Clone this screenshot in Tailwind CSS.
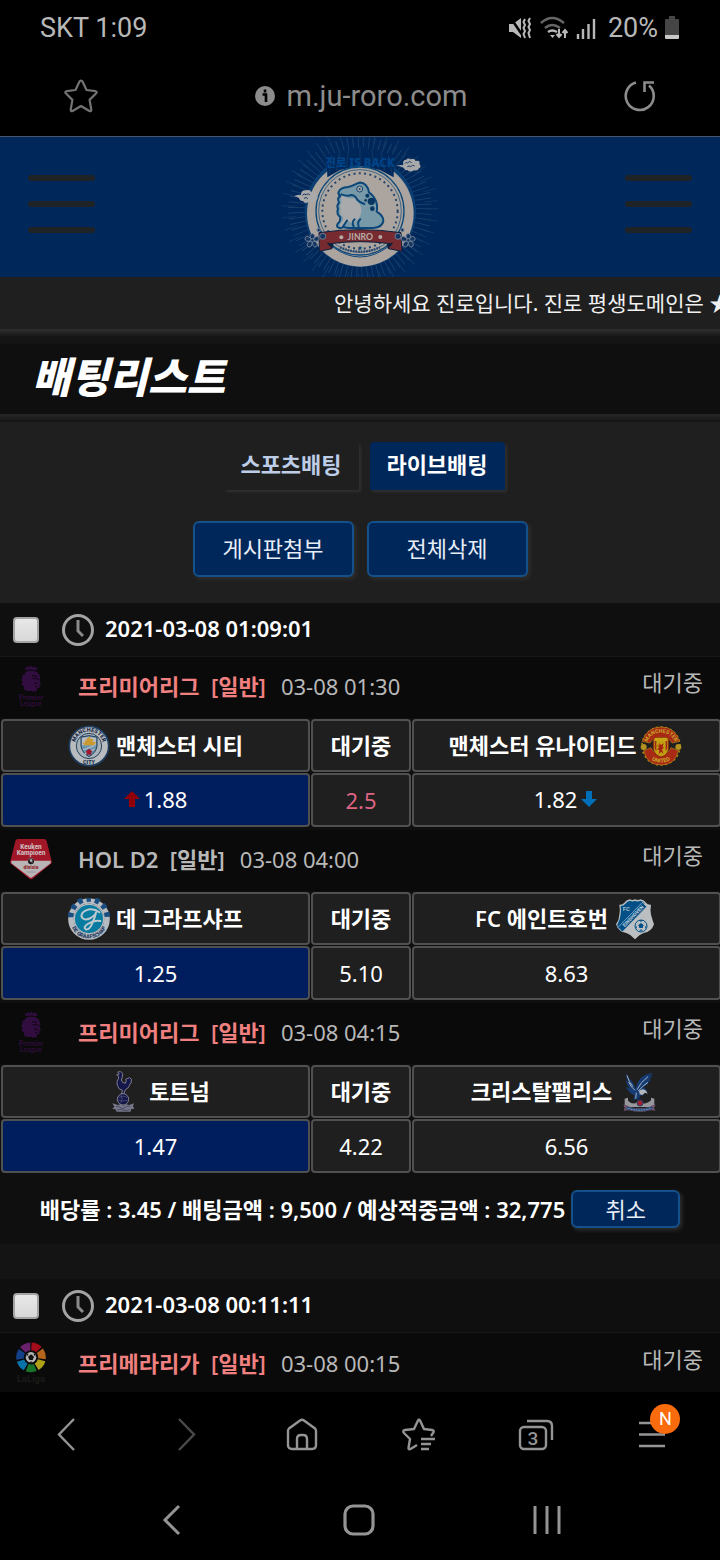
<!DOCTYPE html>
<html lang="ko">
<head>
    <meta charset="UTF-8">
    <meta name="viewport" content="width=device-width, initial-scale=1.0">
    <title>배팅리스트</title>
    <script src="https://cdn.jsdelivr.net/npm/@tailwindcss/browser@4"></script>
</head>
<body class="bg-black text-white text-[22px] leading-7 font-['Noto_Sans','Noto_Sans_CJK_KR',sans-serif]">

    <!-- Shared icons -->
    <svg class="hidden" aria-hidden="true">
        <symbol id="clock" viewBox="0 0 34 34">
            <circle cx="17" cy="17" r="14.5" fill="none" stroke="#a3a3a3" stroke-width="3"/>
            <path d="M17 7V18l5 5" fill="none" stroke="#8a8a8a" stroke-width="3"/>
        </symbol>
        <symbol id="premier" viewBox="0 0 126 126">
            <path d="M46 15l-1-9 6 3 3-7 5 6 5-7 5 7 6-6 2 8 6-3-3 9q-17-4-34-1z" fill="#310d40"/>
            <path d="M34 44l4-8-2-6 8-2 3-8 11-3 14 0 10 5 6 7 3 10-3 6 5 12-5 3 1 8-7 2-2 8-10 2-9-3-6 2-12-4-2-11-7-6 4-6z" fill="#310d40"/>
            <path d="M66 32l15 2M68 42l9-2 9 3M72 54l12 1M75 65l7 0" fill="none" stroke="#10050f" stroke-width="3"/>
            <text x="63" y="104" text-anchor="middle" font-family="Lato" font-size="21" font-weight="bold" fill="#300d3d">Premier</text>
            <text x="63" y="122" text-anchor="middle" font-family="Lato" font-size="21" font-weight="bold" fill="#300d3d">League</text>
        </symbol>
    </svg>

    <!-- Status bar -->
    <div class="h-14 px-10 flex items-center justify-between font-['Roboto',sans-serif] text-[27px] text-[#b8b8b8]">
        <span>SKT 1:09</span>
        <div class="flex items-center">
            <svg class="w-6 h-6" viewBox="0 0 24 24" fill="none" stroke="#b8b8b8">
                <path d="M1 8h4l8-6v20l-8-6H1z" fill="#b8b8b8" stroke="none"/>
                <path d="M2 1l13 19" stroke="#000" stroke-width="2.5"/>
                <path d="M17 3l-1.500 3 1.500 3-1.500 3 1.500 3-1.500 3 1.500 4M22 2l-1.500 3 1.500 3-1.500 3 1.500 3-1.500 3 1.500 5" stroke-width="2"/>
            </svg>
            <svg class="w-7 h-6 ml-2" viewBox="0 0 28 24" fill="none" stroke-width="2.4">
                <path d="M1 7Q12-3 24 7M5 12q7-6 15 0" stroke="#666"/>
                <path d="M8 16q4-3 9 0" stroke="#b8b8b8"/>
                <path d="M10 19h5l-2.500 3z" fill="#b8b8b8"/>
                <path d="M19 13v8m-2.500-3l2.500 3 2.500-3M25 22v-8m-2.500 3l2.500-3 2.500 3" stroke="#b8b8b8" stroke-width="2"/>
            </svg>
            <svg class="w-5 h-6 ml-2" viewBox="0 0 20 24" stroke="#b8b8b8" stroke-width="2.4">
                <path d="M2 18v5M7 13v10M12.500 8v15M18 3v20"/>
            </svg>
            <span class="ml-3">20%</span>
            <svg class="w-4 h-6 ml-[6px]" viewBox="0 0 16 24">
                <path d="M5 0h6v3h3q1 0 1 1v16H1V4q0-1 1-1h3z" fill="#454545"/>
                <path d="M1 19h14v3q0 1-1 1H2q-1 0-1-1z" fill="#c8c8c8"/>
            </svg>
        </div>
    </div>

    <!-- Address bar -->
    <div class="h-20 px-16 flex items-center justify-between font-['Roboto',sans-serif] text-[29px] text-[#8c8c8c]">
        <button aria-label="즐겨찾기">
            <svg class="block w-[34px] h-[34px]" viewBox="0 0 34 34" fill="none" stroke="#737373" stroke-width="2.2" stroke-linejoin="round">
                <path d="M17 1.500q1 0 1.500 1l4 8.500 9 1.200q2 .5.700 2.100l-6.600 6.600 1.700 9.800q0 2-1.900 1.300L17 27l-8.400 5q-1.900.700-1.900-1.300l1.700-9.800-6.600-6.600q-1.300-1.600.700-2.100l9-1.200 4-8.500q.5-1 1.500-1z"/>
            </svg>
        </button>
        <div class="flex items-center gap-3">
            <svg class="w-5 h-5" viewBox="0 0 20 20">
                <circle cx="10" cy="10" r="10" fill="#8c8c8c"/>
                <path d="M10 3.500v3M7.500 8.500H11v7.500" fill="none" stroke="#000" stroke-width="2.6"/>
            </svg>
            <span>m.ju-roro.com</span>
        </div>
        <button aria-label="새로고침">
            <svg class="block w-8 h-8" viewBox="0 0 32 32" fill="none" stroke="#8c8c8c" stroke-width="2.6">
                <path d="M12 2.500A14 14 0 1 0 25 5.500M20.500 12V2.500h9.500"/>
            </svg>
        </button>
    </div>

    <!-- Site header -->
    <header class="border-t border-[#46566e] bg-[#00275a] px-7 flex items-center justify-between">
        <button class="w-[67px] pb-[6px] flex flex-col gap-5" aria-label="메뉴">
            <span class="h-[6px] w-full rounded-full bg-[#1f2326]"></span>
            <span class="h-[6px] w-full rounded-full bg-[#1f2326]"></span>
            <span class="h-[6px] w-full rounded-full bg-[#1f2326]"></span>
        </button>
        <svg class="w-[180px] h-[140px]" viewBox="0 21 540 420" role="img" aria-label="진로">
            <g fill="none">
                <circle cx="270" cy="235" r="180" stroke="#1b416d" stroke-width="70" stroke-dasharray="2.5 12"/>
                <circle cx="270" cy="235" r="215" stroke="#123864" stroke-width="40" stroke-dasharray="3 31"/>
            </g>
            <circle cx="271" cy="244" r="167" fill="#0b3f74"/>
            <circle cx="271" cy="250" r="160" fill="#aca59f"/>
            <path d="M170 75L172 142L210 120L270 108L330 120L371 142L372 75L270 50z" fill="#00275a"/>
            <path d="M185 76L178 132M210 64L200 120M236 58L230 110M270 50V105M305 58L312 110M332 64L344 120M355 76L366 132" stroke="#1b416d" stroke-width="2"/>
            <text x="270" y="110" text-anchor="middle" font-size="34" font-weight="900" fill="#004488">진로 IS BACK</text>
            <circle cx="270" cy="243" r="132" fill="#aca59f" stroke="#0b4778" stroke-width="4"/>
            <circle cx="270" cy="243" r="124" fill="none" stroke="#0b4778" stroke-width="2"/>
            <circle cx="270" cy="243" r="113" fill="none" stroke="#27466b" stroke-width="6" stroke-dasharray="6 10"/>
            <!-- Toad -->
            <path d="M262 160q14-6 25 5 9 10 10 22 20 14 24 38 1 12-1 20 21 12 20 28-3 19-30 21h-76l-16-3q-4 5-10 3-11-3-5-13 9-7 8-19-13-11-7-25-5-10 3-19-7-14 4-20-9-6-4-14 5-11 27-13 13-3 28-11z" fill="#7899a8"/>
            <path d="M216 195q22 14 39 9l6 12q12 5 13 24 0 16-9 26-10 7-15 15l-15-7-15 17q-14 1-9-10 9-7 8-19-13-11-7-25-5-10 3-19-6-13 1-23z" fill="#a9aaab"/>
            <g fill="none" stroke="#0b4778" stroke-width="6" stroke-linejoin="round" stroke-linecap="round">
                <path d="M262 160q14-6 25 5 9 10 10 22 20 14 24 38 1 12-1 20 21 12 20 28-3 19-30 21h-76l-16-3q-4 5-10 3-11-3-5-13 9-7 8-19-13-11-7-25-5-10 3-19-7-14 4-20-9-6-4-14 5-11 27-13 13-3 28-11z"/>
                <path d="M214 193q18 7 29 2 12 0 18 13 7 9 22 14M219 290l12-18M254 268q-10 8-3 22M271 268q-10 8-5 22"/>
            </g>
            <circle cx="269" cy="177" r="9" fill="#aca59f" stroke="#0b4778" stroke-width="3"/>
            <circle cx="269" cy="177" r="3" fill="#0b4778"/>
            <g fill="#083762">
                <circle cx="292" cy="197" r="6"/><circle cx="304" cy="214" r="11"/>
                <circle cx="287" cy="211" r="4"/><circle cx="307" cy="236" r="7"/>
            </g>
            <!-- Ribbon and lower lettering -->
            <path d="M187 350Q270 412 355 350" fill="none" stroke="#0b4778" stroke-width="3"/>
            <path d="M210 352Q270 378 330 352" fill="none" stroke="#27466b" stroke-width="7" stroke-dasharray="5 3"/>
            <text x="270" y="358" text-anchor="middle" font-size="15" fill="#0b4778">★</text>
            <path d="M147 308Q270 290 393 308L396 364L355 356L352 340Q270 330 189 340L186 356L148 364z" fill="#772b31" stroke="#0b1f3c" stroke-width="3"/>
            <path d="M189 340L186 356L170 338zM352 340L355 356L370 338z" fill="#0b1f3c"/>
            <circle cx="214" cy="322" r="6" fill="#b5aca7"/><circle cx="331" cy="321" r="6" fill="#b5aca7"/>
            <text x="271" y="329" text-anchor="middle" font-family="Lato" font-size="26" font-weight="bold" fill="#b5aca7">JINRO</text>
            <!-- Flowers -->
            <g fill="#12345f" stroke="#708098" stroke-width="3">
                <path d="M127 331q-14-18 0-20 14 2 0 20 14-20 20-6 2 13-20 6 22 8 12 19-12 5-12-19 0 25-13 19-10-11 13-19-23 8-22-7 7-12 22 7z"/>
                <path d="M415 331q-14-18 0-20 14 2 0 20 14-20 20-6 2 13-20 6 22 8 12 19-12 5-12-19 0 25-13 19-10-11 13-19-23 8-22-7 7-12 22 7z"/>
                <circle cx="127" cy="331" r="5"/><circle cx="415" cy="331" r="5"/>
                <circle cx="158" cy="319" r="9"/><circle cx="384" cy="319" r="9"/>
                <circle cx="146" cy="300" r="5"/><circle cx="397" cy="300" r="5"/>
            </g>
            <!-- Clouds -->
            <path d="M378 108q14-4 22-2-4-17 9-17 3-7 13-1 10-6 15 5 15-3 11 9 8 8-1 13-4 9-15 6-11 8-20-1-6 3-9-4-8-9-25-8z" fill="#aaa9aa"/>
            <path d="M72 199q10-7 21-4-1-14 14-14 14-4 17 6 15-6 15 9 8 8 0 15-10 10-23 5-12 8-17-3-10 1-12-9-7-5-15-5z" fill="#aaa9aa"/>
            <path d="M405 101q3-7 8-2 5-9 12-1M412 110q5-4 10 0 6-7 12-2M97 196q5-7 11-2 8-6 12 1M102 205q7-5 12 1" fill="none" stroke="#203f65" stroke-width="3"/>
        </svg>
        <button class="w-[67px] pb-[6px] flex flex-col gap-5" aria-label="내 정보">
            <span class="h-[6px] w-full rounded-full bg-[#1f2326]"></span>
            <span class="h-[6px] w-full rounded-full bg-[#1f2326]"></span>
            <span class="h-[6px] w-full rounded-full bg-[#1f2326]"></span>
        </button>
    </header>

    <!-- Notice ticker -->
    <div class="h-[52px] pl-[334px] flex items-center overflow-hidden whitespace-nowrap bg-[#1f1f1f] text-[21px] text-[#f0f0f0]">
        <p>안녕하세요 진로입니다. 진로 평생도메인은 ★</p>
    </div>
    <div class="h-[15px] bg-linear-to-b from-[#303030] via-[#161616] to-[#131313]"></div>

    <!-- Page title -->
    <div class="h-[70px] px-8 pb-1 flex items-center bg-[#0f0f0f]">
        <h1 class="text-[42px] leading-[60px] font-black italic">배팅리스트</h1>
    </div>
    <div class="h-2 bg-linear-to-b from-[#282828] to-[#141414]"></div>

    <main class="overflow-x-clip bg-[#141414]">
        <section class="bg-[#1f1f1f] pt-5 pb-[26px]">
            <div class="pl-2 flex justify-center gap-[11px] font-bold">
                <button class="w-[135px] h-12 pb-1 rounded-t text-[#bdcde8] shadow-[2px_2px_3px_#303030]">스포츠배팅</button>
                <button class="w-[135px] h-12 pb-1 rounded-t bg-[#00275a] shadow-[2px_2px_3px_#303030]">라이브배팅</button>
            </div>
            <div class="mt-[31px] flex justify-center gap-[13px]">
                <button class="w-[161px] h-14 pb-[2px] rounded-md border-2 border-[#14508a] bg-[#00275a] text-[#e8eef8] shadow-[2px_2px_4px_#303030]">게시판첨부</button>
                <button class="w-[161px] h-14 pb-[2px] rounded-md border-2 border-[#14508a] bg-[#00275a] text-[#e8eef8] shadow-[2px_2px_4px_#303030]">전체삭제</button>
            </div>
        </section>

        <!-- Bet slip 1 -->
        <section class="bg-[#0f0f0f]">
            <div class="h-[54px] pl-[13px] flex items-center border-b border-[#161616]">
                <input type="checkbox" id="bet1" class="appearance-none w-[26px] h-[26px] rounded border-2 border-[#a3a3a3] bg-linear-to-b from-[#e8e8e8] to-[#d8d8d8]">
                <label for="bet1" class="ml-[22px] flex items-center gap-[10px] font-semibold">
                    <svg class="w-[34px] h-[34px]"><use href="#clock"/></svg>
                    <span class="pb-[3px]">2021-03-08 01:09:01</span>
                </label>
            </div>

            <!-- Match 1 -->
            <div class="h-[61px] pl-[10px] pr-[17px] pb-[3px] flex items-center bg-[#0a0a0a]">
                <svg class="w-[42px] h-[42px]"><use href="#premier"/></svg>
                <h2 class="ml-[26px] font-semibold text-[#f08080] whitespace-pre">프리미어리그  [일반]</h2>
                <span class="ml-[15px] text-[#b8b8b8]">03-08 01:30</span>
                <span class="ml-auto pb-2 text-[#b8b8b8]">대기중</span>
            </div>
            <table class="w-[calc(100%+2px)] table-fixed border-separate border-spacing-px mb-[2px] text-center">
                <tr class="h-[53px] font-semibold">
                    <td class="rounded-sm border-2 border-[#505050] bg-[#1f1f1f]">
                        <div class="flex items-center justify-center gap-[6px]">
                            <svg class="w-[42px] h-[42px]" viewBox="0 0 126 126">
                                <circle cx="63" cy="63" r="59" fill="#b9bcbe" stroke="#1e3d5e" stroke-width="5"/>
                                <circle cx="63" cy="63" r="38" fill="#a8b4ba" stroke="#25425f" stroke-width="3"/>
                                <path id="cityTop" d="M20 63a43 43 0 0 1 86 0" fill="none"/>
                                <text font-family="Roboto" font-size="17" font-weight="900" fill="#182c4c" text-anchor="middle"><textPath href="#cityTop" startOffset="50%">MANCHESTER</textPath></text>
                                <text x="63" y="117" font-family="Roboto" font-size="16" font-weight="900" fill="#182c4c" text-anchor="middle">CITY</text>
                                <path d="M39 36q24-8 48 0v27q-3 20-24 32-21-12-24-32z" fill="#6b94ae" stroke="#213a58" stroke-width="3"/>
                                <path d="M42 39q21-6 42 0v22H42z" fill="#b7bbbe"/>
                                <path d="M43 53h8v-7h5v-6h6v-5h5v7h8v9h9l-6 10H49z" fill="#ca9a31"/>
                                <path d="M45 75l34-13M50 87l30-15" stroke="#aebec7" stroke-width="4"/>
                                <path d="M63 71l9 7-3 11H57l-3-11z" fill="#9d1731"/>
                            </svg>
                            <span class="pb-[2px]">맨체스터 시티</span>
                        </div>
                    </td>
                    <td class="w-[100px] pb-[2px] rounded-sm border-2 border-[#505050] bg-[#1f1f1f]">대기중</td>
                    <td class="rounded-sm border-2 border-[#505050] bg-[#1f1f1f]">
                        <div class="pr-[2px] flex items-center justify-center gap-1">
                            <span class="pb-[2px]">맨체스터 유나이티드</span>
                            <svg class="w-[42px] h-[42px]" viewBox="0 0 126 126">
                                <circle cx="63" cy="63" r="57" fill="none" stroke="#a88013" stroke-width="5" stroke-dasharray="6 8"/>
                                <path d="M7 49q14-43 56-43t56 43l-23 5q-8-17-33-17t-33 17z" fill="#a92a14" stroke="#b68b19" stroke-width="2"/>
                                <path d="M11 77l22-9q8 21 30 21t30-21l22 9q-9 43-52 43T11 77z" fill="#a92a14" stroke="#b68b19" stroke-width="2"/>
                                <path id="utdTop" d="M20 57q10-34 43-34t43 34" fill="none"/>
                                <text font-family="Roboto" font-size="16" font-weight="900" fill="#c59c2a" text-anchor="middle"><textPath href="#utdTop" startOffset="50%">MANCHESTER</textPath></text>
                                <path id="utdLow" d="M20 88q15 25 43 25t43-25" fill="none"/>
                                <text font-family="Roboto" font-size="17" font-weight="900" fill="#c59c2a" text-anchor="middle"><textPath href="#utdLow" startOffset="50%">UNITED</textPath></text>
                                <circle cx="11" cy="66" r="9" fill="#b49222"/><circle cx="115" cy="66" r="9" fill="#b49222"/>
                                <path d="M40 42q23-7 46 0v29q-3 20-23 25-20-5-23-25z" fill="#c0a012" stroke="#8d2414" stroke-width="3"/>
                                <path d="M44 44h5v34l-5-7zM77 44h5v27l-5 7z" fill="#9d2917"/>
                                <path d="M44 39h38v9H44z" fill="#c9a515"/>
                                <path d="M57 54l6 6 8-5-3 10 4 4-6 3 4 14-7-6-7 8 2-13-7-2 7-6-8-6 8 1z" fill="#a42212"/>
                            </svg>
                        </div>
                    </td>
                </tr>
                <tr class="h-[54px]">
                    <td class="rounded-sm border-2 border-[#505050] bg-[#001d5e]">
                        <div class="pb-[3px] flex items-center justify-center gap-1">
                            <svg class="w-4 h-4" viewBox="0 0 16 16"><path d="M8 0l8 8h-5v8H5V8H0z" fill="#900006"/></svg>
                            1.88
                        </div>
                    </td>
                    <td class="rounded-sm border-2 border-[#505050] bg-[#1f1f1f] text-[#dd6482]">2.5</td>
                    <td class="rounded-sm border-2 border-[#505050] bg-[#1f1f1f]">
                        <div class="pr-[2px] pb-[3px] flex items-center justify-center gap-1">
                            1.82
                            <svg class="w-4 h-4" viewBox="0 0 16 16"><path d="M8 16L0 8h5V0h6v8h5z" fill="#006fb8"/></svg>
                        </div>
                    </td>
                </tr>
            </table>

            <!-- Match 2 -->
            <div class="h-[61px] pl-[10px] pr-[17px] pb-[3px] flex items-center bg-[#0a0a0a]">
                <svg class="w-[42px] h-[42px]" viewBox="0 0 126 126">
                    <path d="M24 3h78q6 0 8 6l15 61q2 5-3 8l-54 44q-5 4-10 0L4 78q-5-3-3-8L16 9q2-6 8-6z" fill="#a01828"/>
                    <path d="M4 68h49q3-9 10-9t10 9h49v8l-55 42q-4 3-8 0L4 76z" fill="#b9b4b5"/>
                    <text x="63" y="34" font-family="Roboto" font-size="19" font-weight="900" fill="#cdb6b9" text-anchor="middle">Keuken</text>
                    <text x="63" y="52" font-family="Roboto" font-size="19" font-weight="900" fill="#cdb6b9" text-anchor="middle">Kampioen</text>
                    <circle cx="63" cy="70" r="9" fill="#17171a"/><path d="M59 65l7-1 1 6-5 2zM64 75l5-2" fill="#c0bcbc" stroke="#c0bcbc"/>
                    <text x="63" y="93" font-family="Roboto" font-size="15" font-weight="900" fill="#8d1f2a" text-anchor="middle">divisie</text>
                    <path d="M49 102h28" stroke="#888" stroke-width="2"/>
                </svg>
                <h2 class="ml-[26px] font-semibold text-[#b8b8b8] whitespace-pre">HOL D2  [일반]</h2>
                <span class="ml-[15px] text-[#b8b8b8]">03-08 04:00</span>
                <span class="ml-auto pb-2 text-[#b8b8b8]">대기중</span>
            </div>
            <table class="w-[calc(100%+2px)] table-fixed border-separate border-spacing-px mb-[2px] text-center">
                <tr class="h-[53px] font-semibold">
                    <td class="rounded-sm border-2 border-[#505050] bg-[#1f1f1f]">
                        <div class="flex items-center justify-center gap-[6px]">
                            <svg class="w-[42px] h-[42px]" viewBox="0 0 126 126">
                                <circle cx="63" cy="63" r="54" fill="none" stroke="#b5bbc0" stroke-width="17"/>
                                <path d="M8 58a55 55 0 0 1 110 0" fill="none" stroke="#1a4d80" stroke-width="17" stroke-dasharray="14 12"/>
                                <circle cx="63" cy="63" r="44" fill="#087ba0" stroke="#b5bbc0" stroke-width="4"/>
                                <path id="graaf" d="M7 76q14 45 56 45t56-45" fill="none"/>
                                <text font-family="Roboto" font-size="16" font-weight="900" fill="#1b3960" text-anchor="middle"><textPath href="#graaf" startOffset="50%">DE GRAAFSCHAP</textPath></text>
                                <path d="M94 43q-18-14-40-6-18 8-12 22 8 10 26 1 17-11 16-18-2 14-13 38-8 17-18 14-8-7 6-16 18-12 38-9" fill="none" stroke="#bcc9ce" stroke-width="6" stroke-linecap="round"/>
                            </svg>
                            <span class="pb-[2px]">데 그라프샤프</span>
                        </div>
                    </td>
                    <td class="w-[100px] pb-[2px] rounded-sm border-2 border-[#505050] bg-[#1f1f1f]">대기중</td>
                    <td class="rounded-sm border-2 border-[#505050] bg-[#1f1f1f]">
                        <div class="pr-[2px] flex items-center justify-center gap-[6px]">
                            <span class="pb-[2px]">FC 에인트호번</span>
                            <svg class="w-[42px] h-[42px]" viewBox="0 0 126 126">
                                <path d="M63 4q8 4 17 0 11 2 16 10 5 7 15 6-3 15 0 30 4 14 9 29-7 22-31 26-15 5-26 19-11-14-26-19-24-4-31-26 10-15 10-29 3-15 0-30 10 1 15-6 5-8 16-10 8 4 16 0z" fill="#bcbfc1"/>
                                <path d="M63 9q8 3 17-1 7 1 12 9L14 93q-4-6-4-13 9-16 10-31 2-14 0-25 9 0 14-7 4-6 13-9 8 4 16 1z" fill="#004f87"/>
                                <path d="M85 13l13 13-73 76-13-14z" fill="#004f87" stroke="#b8c3cb" stroke-width="2"/>
                                <text x="37" y="38" font-family="Roboto" font-size="18" font-weight="bold" fill="#a8bac8" text-anchor="middle">FC</text>
                                <path id="eindhoven" d="M21 99l80-82" fill="none"/>
                                <text font-family="Roboto" font-size="15" font-weight="900" fill="#b8c8d5" text-anchor="middle"><textPath href="#eindhoven" startOffset="50%">EINDHOVEN</textPath></text>
                                <circle cx="81" cy="84" r="18" fill="#bcbfc1" stroke="#004f87" stroke-width="3"/>
                                <path d="M81 75l8 6-3 9H76l-3-9zM73 67l8 4 8-4zM64 80l5 8-1 6zM98 80l-5 8 1 6zM75 98l6-4 6 4z" fill="#004f87"/>
                            </svg>
                        </div>
                    </td>
                </tr>
                <tr class="h-[54px]">
                    <td class="rounded-sm border-2 border-[#505050] bg-[#001d5e]">1.25</td>
                    <td class="rounded-sm border-2 border-[#505050] bg-[#1f1f1f]">5.10</td>
                    <td class="rounded-sm border-2 border-[#505050] bg-[#1f1f1f]">8.63</td>
                </tr>
            </table>

            <!-- Match 3 -->
            <div class="h-[61px] pl-[10px] pr-[17px] pb-[3px] flex items-center bg-[#0a0a0a]">
                <svg class="w-[42px] h-[42px]"><use href="#premier"/></svg>
                <h2 class="ml-[26px] font-semibold text-[#f08080] whitespace-pre">프리미어리그  [일반]</h2>
                <span class="ml-[15px] text-[#b8b8b8]">03-08 04:15</span>
                <span class="ml-auto pb-2 text-[#b8b8b8]">대기중</span>
            </div>
            <table class="w-[calc(100%+2px)] table-fixed border-separate border-spacing-px text-center">
                <tr class="h-[53px] font-semibold">
                    <td class="rounded-sm border-2 border-[#505050] bg-[#1f1f1f]">
                        <div class="flex items-center justify-center gap-[6px]">
                            <svg class="w-[42px] h-[42px]" viewBox="0 0 126 126">
                                <path d="M50 3q11-4 15 5 0 10-4 19 3 10 12 10 5-8 1-12l11-5 7 5q-3 5-1 11-5 1-6 8-3 9-12 12l-4 12-8 1 4-11q-13-2-16-15-4-13 4-21 2-8-6-10l8-3z" fill="#15164a" stroke="#7d7d90" stroke-width="3"/>
                                <circle cx="66" cy="85" r="17" fill="#15164a" stroke="#7d7d90" stroke-width="3"/>
                                <path d="M53 79q14-6 26 0M50 87q17 6 30 1M60 71q7 14-1 26" fill="none" stroke="#55587d" stroke-width="2"/>
                                <path d="M34 97l17 5 9-3 7 5 9-4 8 2 15-5-3 9 4 7-9 1-3 8H47l-4-7-9-1 6-7z" fill="#77778a"/>
                                <path d="M45 107q8-3 14 3t14-1 15-2M48 117q9-4 19 0t19-2" fill="none" stroke="#353652" stroke-width="2"/>
                            </svg>
                            <span class="pb-[2px]">토트넘</span>
                        </div>
                    </td>
                    <td class="w-[100px] pb-[2px] rounded-sm border-2 border-[#505050] bg-[#1f1f1f]">대기중</td>
                    <td class="rounded-sm border-2 border-[#505050] bg-[#1f1f1f]">
                        <div class="pr-[2px] flex items-center justify-center gap-[6px]">
                            <span class="pb-[2px]">크리스탈팰리스</span>
                            <svg class="w-[42px] h-[42px]" viewBox="0 0 126 126">
                                <path d="M24 6q4 13 15 22 12 12 14 25Q58 30 71 19q12-11 33-13-6 7-9 9l9-1-11 11 7 1-12 10 4 2-16 11q8 3 13 14l-9-1-3 11-10 1-6 12-7-2-8 5 3-16Q33 66 23 47l12 6Q24 40 24 28l9 9Q24 24 24 6z" fill="#153b72"/>
                                <path d="M27 13q5 20 18 34M32 33q8 17 19 25M57 56Q68 33 90 17M61 60Q73 45 90 34M64 61l17 2M55 65l-2 18" fill="none" stroke="#a1afc0" stroke-width="3"/>
                                <path d="M63 59q12-9 21 0l5 9-8-3-8 7-8-2z" fill="#b5b8ba"/>
                                <path d="M20 83l10-3v9q9 10 22 8l10-8 11 8q16 2 26-9v-8l10 3v25H20z" fill="#98979d"/>
                                <circle cx="66" cy="96" r="9" fill="#a3202c" stroke="#233d6b" stroke-width="3"/>
                                <path d="M16 101q11-1 17 6 33 9 63 0 6-7 17-6l-5 9 4 9q-10-2-16-1-29 9-63 0-7-1-16 1l3-9z" fill="#70536b"/>
                                <path d="M26 110q40 14 77 0" fill="none" stroke="#22477c" stroke-width="8"/>
                                <path d="M29 112q36 11 71 0" fill="none" stroke="#a4b1bf" stroke-width="3" stroke-dasharray="3 2"/>
                            </svg>
                        </div>
                    </td>
                </tr>
                <tr class="h-[54px]">
                    <td class="rounded-sm border-2 border-[#505050] bg-[#001d5e]">1.47</td>
                    <td class="rounded-sm border-2 border-[#505050] bg-[#1f1f1f]">4.22</td>
                    <td class="rounded-sm border-2 border-[#505050] bg-[#1f1f1f]">6.56</td>
                </tr>
            </table>

            <div class="h-[70px] flex items-center justify-center gap-[6px] font-semibold whitespace-nowrap">
                <p>배당률 : 3.45 / 배팅금액 : 9,500 / 예상적중금액 : 32,775</p>
                <button class="w-[109px] h-[38px] rounded-md border-2 border-[#14508a] bg-[#00275a] font-normal text-[#e8eef8] leading-7 shadow-[2px_2px_4px_#303030]">취소</button>
            </div>
        </section>

        <!-- Bet slip 2 -->
        <section class="mt-[35px] bg-[#0f0f0f]">
            <div class="h-[54px] pl-[13px] flex items-center border-b border-[#161616]">
                <input type="checkbox" id="bet2" class="appearance-none w-[26px] h-[26px] rounded border-2 border-[#a3a3a3] bg-linear-to-b from-[#e8e8e8] to-[#d8d8d8]">
                <label for="bet2" class="ml-[22px] flex items-center gap-[10px] font-semibold">
                    <svg class="w-[34px] h-[34px]"><use href="#clock"/></svg>
                    <span class="pb-[3px]">2021-03-08 00:11:11</span>
                </label>
            </div>
            <div class="h-[59px] pl-[10px] pr-[17px] flex items-center bg-[#0a0a0a]">
                <svg class="w-[42px] h-[42px]" viewBox="0 0 126 126">
                    <g fill="none" stroke-width="23" stroke-dasharray="25 183" transform="rotate(-88 63 46)">
                        <circle cx="63" cy="46" r="33" stroke="#a20d19"/>
                        <circle cx="63" cy="46" r="33" stroke="#b3661c" stroke-dashoffset="-29.600"/>
                        <circle cx="63" cy="46" r="33" stroke="#afa018" stroke-dashoffset="-59.200"/>
                        <circle cx="63" cy="46" r="33" stroke="#17742a" stroke-dashoffset="-88.800"/>
                        <circle cx="63" cy="46" r="33" stroke="#0873a8" stroke-dashoffset="-118.400"/>
                        <circle cx="63" cy="46" r="33" stroke="#14408a" stroke-dashoffset="-148"/>
                        <circle cx="63" cy="46" r="33" stroke="#69216b" stroke-dashoffset="-177.600"/>
                    </g>
                    <circle cx="63" cy="46" r="18" fill="#b5b5b5" stroke="#0a0a0a" stroke-width="4"/>
                    <path d="M63 37l9 7-4 10H58l-4-10zM50 34l6 2-6 8zM76 34l-6 2 6 8zM57 62l6-4 6 4z" fill="#111"/>
                    <text x="63" y="120" font-family="Roboto" font-size="28" font-weight="bold" fill="#1c1a19" text-anchor="middle">LaLiga</text>
                </svg>
                <h2 class="ml-[26px] font-semibold text-[#f08080] whitespace-pre">프리메라리가  [일반]</h2>
                <span class="ml-[15px] text-[#b8b8b8]">03-08 00:15</span>
                <span class="ml-auto pb-2 text-[#b8b8b8]">대기중</span>
            </div>
        </section>
    </main>

    <!-- Browser toolbar -->
    <nav class="h-[86px] px-2 grid grid-cols-6 place-items-center text-[#949494]">
        <button aria-label="뒤로">
            <svg class="block w-9 h-9" viewBox="0 0 36 36" fill="none" stroke="currentColor" stroke-width="2.4"><path d="M25 2L10 17.500l15 15.500"/></svg>
        </button>
        <button aria-label="앞으로" class="text-[#4a4a4a]">
            <svg class="block w-9 h-9" viewBox="0 0 36 36" fill="none" stroke="currentColor" stroke-width="2.4"><path d="M13 2l15 15.500L13 33"/></svg>
        </button>
        <button aria-label="홈">
            <svg class="block w-9 h-9" viewBox="0 0 36 36" fill="none" stroke="currentColor" stroke-width="2.4">
                <path d="M5 14q0-1.500 1-2.500l11-8q2-1.500 4 0l11 8q1 1 1 2.500v14q0 4-4 4H9q-4 0-4-4z"/>
                <path d="M14 32V22q0-4 4-4h2q4 0 4 4v10"/>
            </svg>
        </button>
        <button aria-label="북마크">
            <svg class="block w-9 h-9" viewBox="0 0 36 36" fill="none" stroke="currentColor" stroke-width="2.4" stroke-linejoin="round">
                <path d="M30 19l2-3q2-2-1-3l-8-1-4-8.500q-1-1.500-2 0L13 12l-9 1q-3 1-1 3l6 6-1.500 9q0 2 2 1l6.500-4"/>
                <path d="M20 22h14M20 27h10M20 32h8"/>
            </svg>
        </button>
        <button aria-label="탭">
            <svg class="block w-9 h-9" viewBox="0 0 36 36" fill="none" stroke="currentColor" stroke-width="2.4">
                <rect x="2" y="10" width="26" height="22" rx="4"/>
                <path d="M9 4h20q5 0 5 5V23"/>
                <text x="15" y="28" text-anchor="middle" font-family="Roboto" font-size="19" font-weight="500" fill="currentColor" stroke="none">3</text>
            </svg>
        </button>
        <button aria-label="메뉴" class="relative">
            <svg class="block w-9 h-9" viewBox="0 0 36 36" fill="none" stroke="currentColor" stroke-width="2.6"><path d="M4 6h26M4 17.500h26M4 29h26"/></svg>
            <span class="absolute -top-[13px] -right-[9px] w-[30px] h-[30px] rounded-full bg-[#f96b0c] text-white text-lg leading-[30px] font-['Roboto',sans-serif]">N</span>
        </button>
    </nav>

    <!-- System navigation -->
    <nav class="h-[82px] px-[79px] grid grid-cols-3 place-items-center text-[#949494]">
        <button aria-label="이전">
            <svg class="block w-9 h-9" viewBox="0 0 36 36" fill="none" stroke="currentColor" stroke-width="3"><path d="M24 5L10 19l14 14"/></svg>
        </button>
        <button aria-label="홈 화면">
            <svg class="block w-9 h-9" viewBox="0 0 36 36" fill="none" stroke="currentColor" stroke-width="3.2"><rect x="3" y="5" width="28" height="28" rx="8"/></svg>
        </button>
        <button aria-label="최근 앱">
            <svg class="block w-9 h-9" viewBox="0 0 36 36" fill="none" stroke="currentColor" stroke-width="3"><path d="M6 5v28M18 5v28M30 5v28"/></svg>
        </button>
    </nav>

</body>
</html>
